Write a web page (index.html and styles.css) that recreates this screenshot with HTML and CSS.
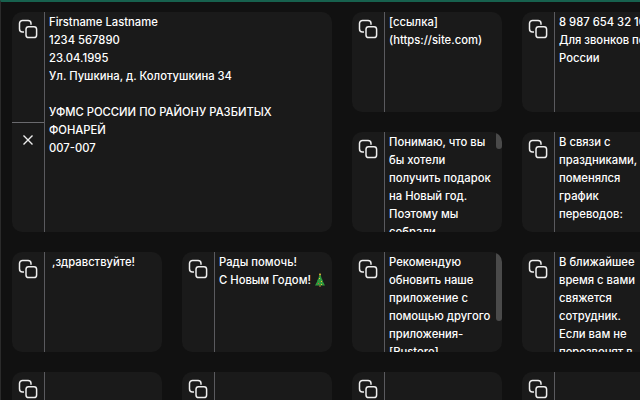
FILE: index.html
```html
<!DOCTYPE html>
<html lang="ru">
<head>
<meta charset="utf-8">
<title>Шаблоны</title>
<link rel="stylesheet" href="styles.css">
</head>
<body>
<svg class="defs" width="0" height="0" aria-hidden="true"><defs>
<symbol id="copy" viewBox="0 0 20 20"><rect x="8" y="7.700" width="10.600" height="10.800" rx="2.600"/><path d="M13 5.700V4.500a3 3 0 0 0-3-3H4.500a3 3 0 0 0-3 3V10a3 3 0 0 0 3 3H6"/></symbol>
</defs></svg>
<main class="grid">
  <article class="card big">
    <div class="side">
      <button class="act"><svg class="ico"><use href="#copy"/></svg></button>
      <button class="act split"><svg class="ico x" viewBox="0 0 20 20"><path d="M5.500 5.500l9 9M14.500 5.500l-9 9"/></svg></button>
    </div>
    <div class="text">Firstname Lastname
1234 567890
23.04.1995
Ул. Пушкина, д. Колотушкина 34

УФМС РОССИИ ПО РАЙОНУ РАЗБИТЫХ ФОНАРЕЙ
007-007</div>
  </article>
  <article class="card">
    <div class="side"><button class="act"><svg class="ico"><use href="#copy"/></svg></button></div>
    <div class="text">[ссылка]
(https://site.com)</div>
  </article>
  <article class="card">
    <div class="side"><button class="act"><svg class="ico"><use href="#copy"/></svg></button></div>
    <div class="text">8 987 654 32 10
Для звонков по России</div>
  </article>
  <article class="card">
    <div class="side"><button class="act"><svg class="ico"><use href="#copy"/></svg></button></div>
    <div class="text">Понимаю, что вы
бы хотели
получить подарок
на Новый год.
Поэтому мы
собрали</div>
    <span class="thumb short"></span>
  </article>
  <article class="card">
    <div class="side"><button class="act"><svg class="ico"><use href="#copy"/></svg></button></div>
    <div class="text">В связи с праздниками,
поменялся
график
переводов:</div>
  </article>
  <article class="card">
    <div class="side"><button class="act"><svg class="ico"><use href="#copy"/></svg></button></div>
    <div class="text"> ,здравствуйте!</div>
  </article>
  <article class="card">
    <div class="side"><button class="act"><svg class="ico"><use href="#copy"/></svg></button></div>
    <div class="text">Рады помочь!
С Новым Годом! <svg class="tree" viewBox="0 0 12 14"><rect x="5" y="12" width="2" height="2" fill="#7a4a26"/><path d="M6 1 7.500 4.500H7.200L9 8H8.600L11 12.500H1L3.400 8H3L4.800 4.500H4.500z" fill="#2f9a3e"/><path d="M6 0 7 1.500 6 2.800 5 1.500z" fill="#e8c23a"/><rect x="5" y="5" width="1" height="1" fill="#e8c23a"/><rect x="7" y="8" width="1" height="1" fill="#e8c23a"/><rect x="4" y="10" width="1" height="1" fill="#d9483b"/><rect x="7" y="11" width="1" height="1" fill="#e8c23a"/></svg></div>
  </article>
  <article class="card">
    <div class="side"><button class="act"><svg class="ico"><use href="#copy"/></svg></button></div>
    <div class="text">Рекомендую обновить наше приложение с помощью другого приложения- [Rustore]</div>
    <span class="thumb long"></span>
  </article>
  <article class="card">
    <div class="side"><button class="act"><svg class="ico"><use href="#copy"/></svg></button></div>
    <div class="text">В ближайшее время с вами свяжется сотрудник.
Если вам не перезвонят в</div>
  </article>
  <article class="card"><div class="side"><button class="act"><svg class="ico"><use href="#copy"/></svg></button></div><div class="text"></div></article>
  <article class="card"><div class="side"><button class="act"><svg class="ico"><use href="#copy"/></svg></button></div><div class="text"></div></article>
  <article class="card"><div class="side"><button class="act"><svg class="ico"><use href="#copy"/></svg></button></div><div class="text"></div></article>
  <article class="card"><div class="side"><button class="act"><svg class="ico"><use href="#copy"/></svg></button></div><div class="text"></div></article>
</main>
</body>
</html>
```
FILE: styles.css
```css
html, body {
  margin: 0;
  height: 100%;
  overflow: hidden;
  background: #111111;
}
body {
  box-sizing: border-box;
  border-top: 2px solid #17614e;
  border-left: 1px solid #2b2b2b;
  padding: 10px 0 0 11px;
  font-family: Inter, "Liberation Sans", sans-serif;
  font-size: 11.25px;
  font-weight: 500;
  line-height: 18px;
  color: #ffffff;
}
.defs { position: absolute; }
.grid {
  display: grid;
  grid-template-columns: repeat(4, 150px);
  grid-auto-rows: 100px;
  gap: 20px;
  width: 660px;
}
.card {
  position: relative;
  display: flex;
  border-radius: 10px;
  background: #1a1a1a;
  overflow: hidden;
}
.big {
  grid-column: span 2;
  grid-row: span 2;
}
.side {
  flex: 0 0 32px;
  display: flex;
  flex-direction: column;
  border-right: 1px solid #5a5a5e;
}
.act {
  flex: 1;
  display: flex;
  justify-content: center;
  align-items: flex-start;
  padding: 7px 0 0;
  border: 0;
  background: none;
}
.split { border-top: 1px solid #6a6a6e; }
.ico {
  width: 20px;
  height: 20px;
  fill: none;
  stroke: #eeeeee;
  stroke-width: 1.5;
}
.x { stroke-width: 1.4; }
.text {
  flex: 1;
  min-width: 0;
  padding: 1px 3px 0 4px;
  white-space: pre-wrap;
  overflow: hidden;
}
.tree {
  width: 12px;
  height: 14px;
  vertical-align: -3px;
}
.thumb {
  position: absolute;
  top: 0;
  right: 0;
  width: 6px;
  border-radius: 3px;
  background: #4a4a4a;
}
.short { height: 17px; }
.long { height: 69px; }
```
